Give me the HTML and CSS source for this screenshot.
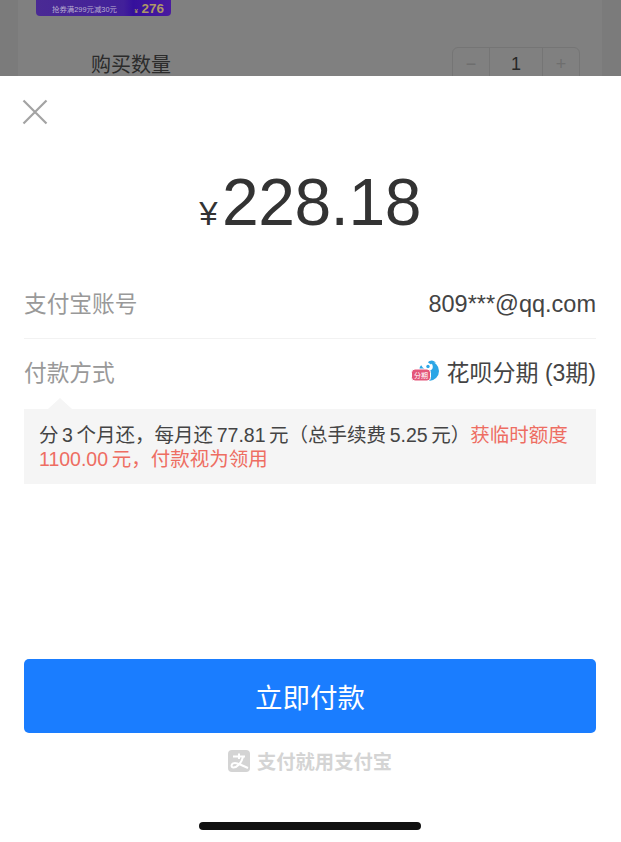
FILE: index.html
```html
<!DOCTYPE html>
<html lang="zh">
<head>
    <title>确认付款</title>
    <meta http-equiv="content-type" content="text/html; charset=UTF-8"/>
    <link rel="stylesheet" href="styles.css">
</head>
<body>
    <div class="backdrop">
        <div class="backdrop-card">
            <div class="promo">
                <span class="promo-label">抢券满299元减30元</span>
                <span class="promo-price"><small>¥</small> 276</span>
            </div>
            <div class="quantity-row">
                <span class="quantity-label">购买数量</span>
                <div class="stepper">
                    <span class="stepper-btn">−</span>
                    <span class="stepper-value">1</span>
                    <span class="stepper-btn">+</span>
                </div>
            </div>
        </div>
    </div>
    <div class="sheet">
        <button class="close" aria-label="关闭">
            <svg width="26" height="26" viewBox="0 0 26 26">
                <path d="M1.5 1.5 L24.500 24.500 M24.500 1.500 L1.500 24.500" stroke="#a3a3a3" stroke-width="2.200" fill="none"/>
            </svg>
        </button>
        <div class="amount"><span class="currency">¥</span>228.18</div>
        <div class="row row-account">
            <span class="row-label">支付宝账号</span>
            <span class="row-value">809***@qq.com</span>
        </div>
        <div class="row row-method">
            <span class="row-label">付款方式</span>
            <span class="row-value method">
                <svg class="huabei" width="28" height="26" viewBox="0 0 28 26">
                    <circle cx="18" cy="13" r="10" fill="#2ba6e6"/>
                    <path d="M8 3 C10 8 13 12 17 12.500 C21 13 23 10 21 6 C20 4.500 19 3.500 17 3 L14 1 Z" fill="#fff"/>
                    <path d="M17 4.500 C19 1.500 23 1.800 25 5 C23 4.500 21 5 20 6.500 Z" fill="#2ba6e6"/>
                    <circle cx="17" cy="8.500" r="1.700" fill="#2ba6e6"/>
                    <rect x="0.500" y="11" width="19" height="12" rx="3.500" fill="#e4567a" stroke="#fff"/>
                    <text x="10" y="20" class="huabei-tag">分期</text>
                </svg>
                <span>花呗分期 (3期)</span>
            </span>
        </div>
        <div class="note">
            <div>分 3 个月还，每月还 77.81 元（总手续费 5.25 元）<span class="note-alert">获临时额度</span></div>
            <div class="note-alert">1100.00 元，付款视为领用</div>
        </div>
        <button class="pay">立即付款</button>
        <div class="slogan">
            <svg width="22" height="22" viewBox="0 0 22 22">
                <rect width="22" height="22" rx="4" fill="#d4d4d4"/>
                <path d="M5 6.500 H17 M11 3.500 V9 M15 7 C13.500 13 9 17.500 5.500 17.500 C2.500 17.500 3 13 7 13 C10 13 14 15.500 20 18" stroke="#fff" stroke-width="2" fill="none"/>
            </svg>
            <span>支付就用支付宝</span>
        </div>
        <div class="home-bar"></div>
    </div>
</body>
</html>
```

FILE: styles.css
```css
html {
    height: 100%;
}

body {
    height: 842px;
    margin: 0;
    display: flex;
    flex-direction: column;
    overflow: hidden;
    background-color: #fff;
    color: #333;
    font-family: "Liberation Sans", "Noto Sans CJK SC", sans-serif;
}

/* dimmed page behind the sheet */
.backdrop {
    height: 76px;
    flex: none;
    overflow: hidden;
    padding: 0 19px 0 18px;
    background-color: #7b7b7b;
}

.backdrop-card {
    height: 76px;
    background-color: #808080;
    padding-left: 18px;
    padding-right: 22px;
}

.promo {
    width: 135px;
    height: 16px;
    box-sizing: border-box;
    padding: 0 7px 0 16px;
    display: flex;
    justify-content: space-between;
    align-items: center;
    border-radius: 0 0 4px 4px;
    background: linear-gradient(90deg, #4a2a94, #42209a 65%, #35109c 72%, #4a1ba0);
}

.promo-label {
    font-size: 7.400px;
    color: #b9afd0;
    white-space: nowrap;
}

.promo-price {
    font-size: 13.500px;
    font-weight: bold;
    color: #ad9866;
    white-space: nowrap;
}

.promo-price small {
    font-size: 6px;
}

.quantity-row {
    display: flex;
    justify-content: space-between;
    margin-top: 31px;
    padding-left: 55px;
}

.quantity-label {
    font-size: 20px;
    line-height: 26px;
    margin-top: 5px;
    color: #2b2b2b;
}

.stepper {
    display: flex;
    height: 40px;
    border: 1px solid #757575;
    border-radius: 6px;
    box-sizing: border-box;
}

.stepper span {
    text-align: center;
    line-height: 32px;
}

.stepper-btn {
    width: 36px;
    font-size: 18px;
    color: #6e6e6e;
}

.stepper-value {
    width: 52px;
    font-size: 18px;
    color: #272727;
    border-left: 1px solid #757575;
    border-right: 1px solid #757575;
}

/* payment sheet */
.sheet {
    flex: 1;
    display: flex;
    flex-direction: column;
    padding: 0 25px 0 24px;
    background-color: #fff;
}

.close {
    align-self: flex-start;
    width: 26px;
    height: 26px;
    margin: 23px 0 0 -2px;
    padding: 0;
    border: 0;
    background: none;
}

.close svg {
    display: block;
}

.amount {
    margin-top: 39px;
    height: 76px;
    text-align: center;
    font-size: 66px;
    line-height: 76px;
    letter-spacing: -0.500px;
    color: #333;
}

.currency {
    font-size: 33px;
    margin-right: 5px;
}

.row {
    display: flex;
    justify-content: space-between;
    align-items: center;
}

.row-account {
    height: 67px;
    padding-bottom: 2px;
    margin-top: 29px;
    border-bottom: 1px solid #f2f2f2;
}

.row-account .row-value {
    margin-top: 4px;
}

.row-method {
    height: 64px;
    padding-bottom: 6px;
}

.row-label {
    color: #999;
    font-size: 22.700px;
}

.row-value {
    color: #444;
    font-size: 23.500px;
}

.method {
    display: flex;
    align-items: center;
    font-size: 23px;
}

.huabei {
    margin-right: 8px;
}

.huabei-tag {
    font-size: 7px;
    fill: #fff;
    text-anchor: middle;
}

.note {
    position: relative;
    height: 75px;
    box-sizing: border-box;
    padding: 14px 16px 0 15px;
    background-color: #f5f5f5;
    font-size: 19.500px;
    line-height: 24px;
    word-spacing: -1.800px;
    color: #444;
}

/* little arrow pointing up at the payment method */
.note::before {
    content: "";
    position: absolute;
    left: 24px;
    top: -11px;
    border-left: 12px solid transparent;
    border-right: 12px solid transparent;
    border-bottom: 11px solid #f5f5f5;
}

.note-alert {
    color: #ee6d62;
}

.pay {
    height: 74px;
    margin-top: 175px;
    border: 0;
    border-radius: 5px;
    background-color: #1a7dff;
    color: #fff;
    font-family: inherit;
    font-size: 27.500px;
}

.slogan {
    display: flex;
    justify-content: center;
    align-items: center;
    gap: 7px;
    margin-top: 17px;
    height: 22px;
    font-size: 19.300px;
    font-weight: bold;
    color: #d4d4d4;
}

.home-bar {
    align-self: center;
    width: 222px;
    height: 8px;
    margin-top: 50px;
    border-radius: 4px;
    background-color: #111;
}
```
